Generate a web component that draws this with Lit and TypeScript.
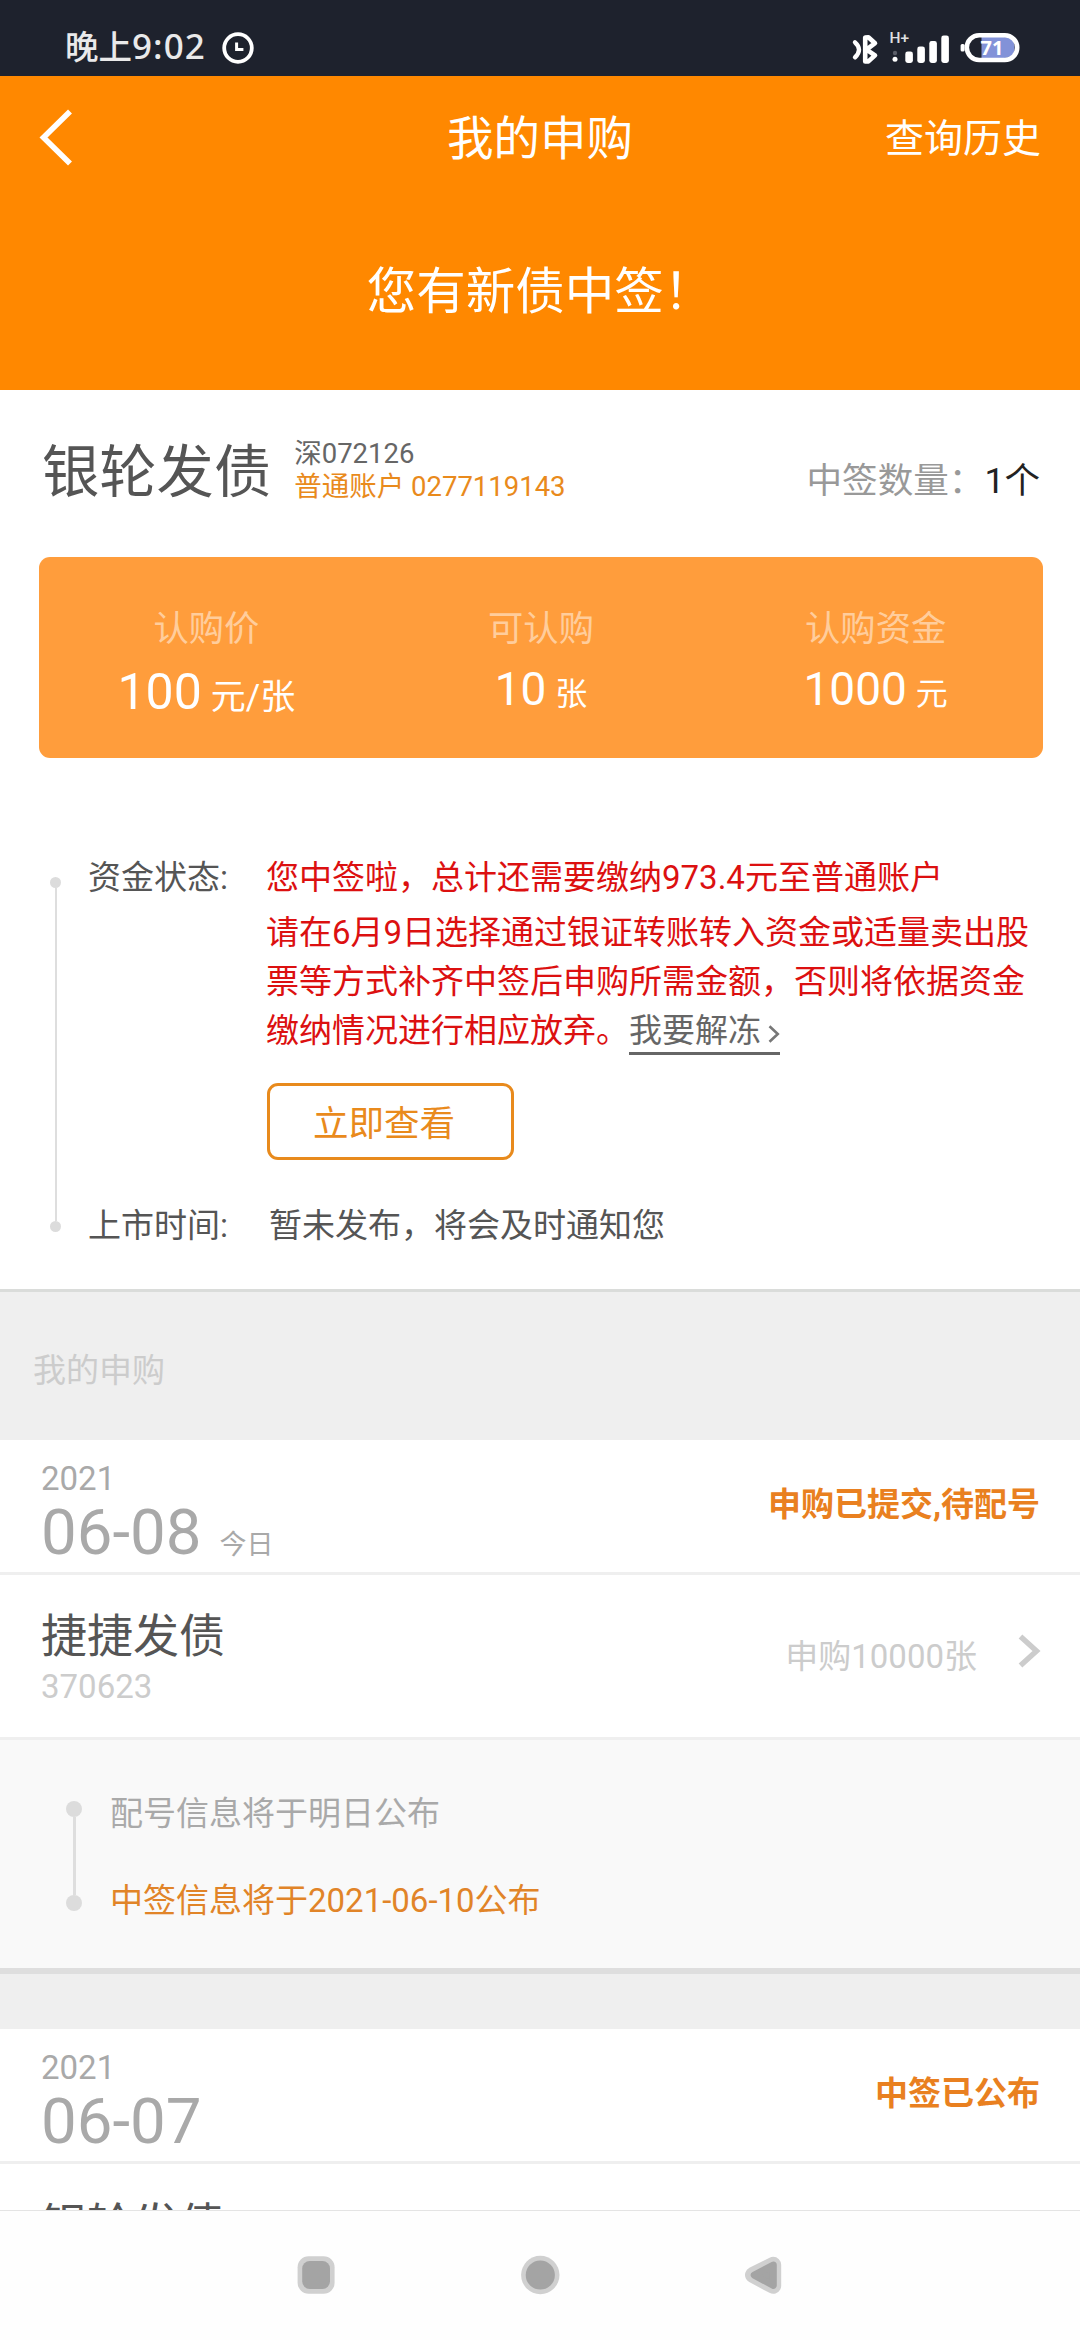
import { LitElement, html, css, nothing } from "lit";
import { customElement, property } from "lit/decorators.js";

interface Stat {
  label: string;
  value: string;
  unit: string;
  large?: boolean;
}

interface SubscriptionRecord {
  year: string;
  day: string;
  tag?: string;
  status: string;
  name: string;
  code: string;
  amount: string;
  steps: { text: string; active: boolean }[];
}

const STATS: Stat[] = [
  { label: "认购价", value: "100", unit: "元/张", large: true },
  { label: "可认购", value: "10", unit: "张" },
  { label: "认购资金", value: "1000", unit: "元" },
];

const RECORDS: SubscriptionRecord[] = [
  {
    year: "2021",
    day: "06-08",
    tag: "今日",
    status: "申购已提交,待配号",
    name: "捷捷发债",
    code: "370623",
    amount: "申购10000张",
    steps: [
      { text: "配号信息将于明日公布", active: false },
      { text: "中签信息将于2021-06-10公布", active: true },
    ],
  },
  {
    year: "2021",
    day: "06-07",
    status: "中签已公布",
    name: "银轮发债",
    code: "",
    amount: "",
    steps: [],
  },
];

@customElement("status-bar")
class StatusBar extends LitElement {
  static styles = css`
    :host {
      display: flex;
      align-items: flex-start;
      justify-content: space-between;
      box-sizing: border-box;
      height: 76px;
      padding: 27px 60px 0 65px;
      background: #1e222d;
      color: #e9e9ea;
    }
    .left {
      display: flex;
      align-items: center;
      height: 42px;
    }
    .time {
      font-size: 33.5px;
      font-weight: 500;
      line-height: 42px;
      white-space: nowrap;
    }
    .digits {
      font-family: "Noto Sans", Roboto, sans-serif;
      font-size: 35px;
      line-height: 1;
      letter-spacing: 1.1px;
    }
    .clock {
      margin-left: 16px;
    }
    svg {
      display: block;
    }
    .net {
      font: 500 15.5px Roboto, sans-serif;
      fill: #e0e0e2;
    }
    .charge {
      font: 700 20px "Noto Sans", Roboto, sans-serif;
      fill: #fff;
    }
  `;

  render() {
    return html`
      <div class="left">
        <span class="time">晚上<span class="digits">9:02</span></span>
        <svg class="clock" width="32" height="32" viewBox="0 0 32 32" fill="none" stroke="#fff">
          <circle cx="16" cy="16" r="13.8" stroke-width="3.8" />
          <path d="M14.6 10.5V17.4H21.4" stroke-width="3" />
        </svg>
      </div>
      <svg width="170" height="40" viewBox="850 27 170 40">
        <g fill="none" stroke="#fff" stroke-linecap="round" stroke-linejoin="round">
          <path d="M865.2 37.5V61.5L868.4 61.4L875 55.4L866.5 49.6L875 43.2L868.4 37.2Z" stroke-width="4.6" />
          <path d="M855 42.3Q863 49.5 855 57.3" stroke-width="4.4" />
        </g>
        <text class="net" x="889.6" y="43">H+</text>
        <circle cx="895" cy="53" r="2.2" fill="#5c5f69" />
        <circle cx="895" cy="59.3" r="2.5" fill="#fff" />
        <g fill="#fff">
          <rect x="905.3" y="51.5" width="7.6" height="11.5" rx="2.4" />
          <rect x="917.3" y="46.5" width="7.6" height="16.5" rx="2.4" />
          <rect x="929.3" y="41" width="7.6" height="22" rx="2.4" />
          <rect x="941.3" y="35.5" width="7.6" height="27.5" rx="2.4" />
          <rect x="960.6" y="44" width="4" height="7.5" rx="1.5" />
        </g>
        <path d="M981.5 37H1004Q1014.5 37 1014.5 47.5T1004 58H981.5Z" fill="#8292d8" />
        <rect x="966.8" y="35.2" width="50.4" height="24.8" rx="12.4" fill="none" stroke="#fff" stroke-width="4.6" />
        <text class="charge" x="980.5" y="54.8">71</text>
      </svg>
    `;
  }
}

@customElement("timeline-rail")
class TimelineRail extends LitElement {
  static styles = css`
    :host {
      display: flex;
      flex-direction: column;
      align-items: center;
      flex: none;
      width: var(--dot, 11px);
    }
    .dot {
      width: var(--dot, 11px);
      height: var(--dot, 11px);
      border-radius: 50%;
      background: #dcdcdc;
    }
    .line {
      flex: 1;
      width: var(--line, 2px);
      background: #dedede;
    }
  `;

  render() {
    return html`<span class="dot"></span><span class="line"></span><span class="dot"></span>`;
  }
}

@customElement("subscription-record")
class SubscriptionRecordView extends LitElement {
  static styles = css`
    :host {
      display: block;
      background: #fff;
      white-space: nowrap;
    }
    .date-row {
      display: flex;
      justify-content: space-between;
      box-sizing: border-box;
      height: 135px;
      padding: 21px 40px 0 41px;
      border-bottom: 3px solid #efefef;
      color: #a9a9a9;
    }
    .year {
      font-size: 33px;
      line-height: 36px;
    }
    .day {
      margin-top: 1px;
      font-size: 63.6px;
      line-height: 70px;
    }
    .tag {
      margin-left: 18px;
      font-size: 27px;
      line-height: 1;
    }
    .status {
      margin-top: 24px;
      font-size: 33px;
      font-weight: 700;
      line-height: 40px;
      color: #e98020;
    }
    .bond-row {
      display: flex;
      align-items: flex-start;
      box-sizing: border-box;
      height: 165px;
      padding: 35px 39px 0 41px;
      border-bottom: 3px solid #efefef;
      color: #ccc;
    }
    .bond {
      flex: 1;
    }
    .name {
      font-size: 46px;
      line-height: 52px;
      color: #555;
    }
    .code {
      margin-top: 3px;
      font-size: 33px;
      line-height: 44px;
    }
    .amount {
      margin: 27px 40px 0 0;
      font-size: 33px;
      line-height: 40px;
    }
    .arrow {
      margin-top: 24px;
    }
    .steps {
      display: flex;
      box-sizing: border-box;
      height: 234px;
      padding: 50px 40px 0 66px;
      border-bottom: 6px solid #dedede;
      background: #f9f9f9;
      --dot: 16px;
      --line: 3px;
    }
    .rail {
      height: 110px;
      margin-top: 11px;
    }
    .step {
      margin: 0 0 39px 28px;
      font-size: 33px;
      line-height: 48px;
      color: #a9a9a9;
    }
    .step.active {
      color: #e18428;
    }
  `;

  @property({ attribute: false }) record!: SubscriptionRecord;

  render() {
    const r = this.record;
    return html`
      <div class="date-row">
        <div>
          <div class="year">${r.year}</div>
          <div class="day">${r.day}${r.tag ? html`<span class="tag">${r.tag}</span>` : nothing}</div>
        </div>
        <div class="status">${r.status}</div>
      </div>
      <div class="bond-row">
        <div class="bond">
          <div class="name">${r.name}</div>
          <div class="code">${r.code}</div>
        </div>
        ${r.amount
          ? html`<div class="amount">${r.amount}</div>
              <svg class="arrow" width="24" height="34" viewBox="0 0 24 34" fill="none" stroke="#ccc" stroke-width="5.4">
                <path d="M3.5 2.5L19.5 17L3.5 31.5" />
              </svg>`
          : nothing}
      </div>
      ${r.steps.length
        ? html`<div class="steps">
            <timeline-rail class="rail"></timeline-rail>
            <div>
              ${r.steps.map((s) => html`<div class="step ${s.active ? "active" : ""}">${s.text}</div>`)}
            </div>
          </div>`
        : nothing}
    `;
  }
}

@customElement("app-root")
class AppRoot extends LitElement {
  static styles = css`
    :host {
      display: flex;
      flex-direction: column;
      width: 1080px;
      height: 2340px;
      overflow: hidden;
      background: #fff;
      font-family: Roboto, "Noto Sans CJK SC", sans-serif;
      white-space: nowrap;
    }
    .header {
      flex: none;
      box-sizing: border-box;
      height: 314px;
      background: #ff8800;
      color: #fff;
    }
    .bar {
      display: grid;
      grid-template-columns: 1fr auto 1fr;
      align-items: center;
      height: 126px;
      padding: 0 39px;
    }
    .back {
      display: block;
      margin-bottom: 5px;
    }
    .title {
      font-size: 46.5px;
      line-height: 60px;
    }
    .history {
      justify-self: end;
      font-size: 39px;
      line-height: 60px;
    }
    .hero {
      text-align: center;
      font-size: 49.5px;
      line-height: 60px;
      padding-top: 60px;
    }
    .content {
      flex: 1;
      min-height: 0;
      overflow: hidden;
    }
    .offer {
      box-sizing: border-box;
      height: 902px;
      border-bottom: 3px solid #dadcda;
    }
    .offer-head {
      display: flex;
      align-items: flex-start;
      height: 167px;
      padding: 0 40px 0 42px;
    }
    .offer-name {
      margin: 53px 23px 0 0;
      font-size: 57.3px;
      line-height: 60px;
      color: #555;
    }
    .meta {
      margin-top: 47px;
      font-size: 27.5px;
      line-height: 33px;
      color: #666;
    }
    .account {
      color: #e98a1c;
    }
    .count {
      margin: 71px 0 0 auto;
      font-size: 35.6px;
      line-height: 41px;
      color: #999;
    }
    .count-value {
      color: #222;
    }
    .card {
      display: grid;
      grid-template-columns: repeat(3, 1fr);
      box-sizing: border-box;
      height: 201px;
      margin: 0 37px 0 39px;
      padding-top: 52px;
      border-radius: 11px;
      background: #ff9d3c;
      text-align: center;
      color: #fff;
    }
    .stat-label {
      font-size: 35.3px;
      line-height: 40px;
      color: #ffcd9c;
    }
    .stat-value {
      margin-top: 10px;
      font-size: 46px;
      line-height: 60px;
    }
    .stat-unit {
      margin-left: 9px;
      font-size: 32px;
      line-height: 1;
    }
    .large .stat-value {
      margin-top: 13px;
      font-size: 50px;
    }
    .large .stat-unit {
      font-size: 35px;
    }
    .progress {
      display: flex;
      padding: 95px 0 0 50px;
      font-size: 33px;
      line-height: 49px;
      color: #555;
    }
    .rail {
      height: 355px;
      margin: 24px 27px 0 0;
    }
    .rows {
      display: grid;
      grid-template-columns: 178px auto;
      row-gap: 41px;
    }
    .alert {
      color: #dc1010;
    }
    .notice {
      margin-top: 6px;
    }
    .notice-last {
      display: flex;
    }
    .unfreeze {
      display: flex;
      align-items: flex-start;
      box-sizing: border-box;
      height: 49px;
      border-bottom: 3px solid #666;
      color: #666;
    }
    .unfreeze-arrow {
      margin: 19px 0 0 7px;
    }
    .view {
      box-sizing: border-box;
      width: 247px;
      height: 77px;
      margin: 28px 0 0 1px;
      padding: 3px 13px 0 0;
      border: 3px solid #e88a1c;
      border-radius: 11px;
      text-align: center;
      font-size: 35.5px;
      line-height: 70px;
      color: #e98a1c;
    }
    .pending {
      padding-left: 3px;
    }
    .section-title {
      box-sizing: border-box;
      height: 148px;
      padding: 54px 33px 0;
      background: #efefef;
      font-size: 33px;
      line-height: 50px;
      color: #ccc;
    }
    .record + .record {
      border-top: 55px solid #efefef;
    }
    .nav {
      flex: none;
      box-sizing: border-box;
      height: 130px;
      border-top: 1px solid #e4e4e4;
      background: #fefefe;
    }
    .nav-icons {
      display: block;
    }
  `;

  render() {
    return html`
      <status-bar></status-bar>
      <header class="header">
        <div class="bar">
          <svg class="back" width="36" height="58" viewBox="0 0 36 58" fill="none" stroke="#fff" stroke-width="5.6">
            <path d="M31 3.5L4.5 29.5L31 55.5" />
          </svg>
          <div class="title">我的申购</div>
          <div class="history">查询历史</div>
        </div>
        <div class="hero">您有新债中签！</div>
      </header>
      <main class="content">
        <section class="offer">
          <div class="offer-head">
            <div class="offer-name">银轮发债</div>
            <div class="meta">
              <div>深072126</div>
              <div class="account">普通账户 0277119143</div>
            </div>
            <div class="count">中签数量：<span class="count-value">1个</span></div>
          </div>
          <div class="card">
            ${STATS.map(
              (s) => html`<div class=${s.large ? "large" : "regular"}>
                <div class="stat-label">${s.label}</div>
                <div class="stat-value">${s.value}<span class="stat-unit">${s.unit}</span></div>
              </div>`
            )}
          </div>
          <div class="progress">
            <timeline-rail class="rail"></timeline-rail>
            <div class="rows">
              <div>资金状态:</div>
              <div>
                <div class="alert">您中签啦，总计还需要缴纳973.4元至普通账户</div>
                <div class="alert notice">
                  <div>请在6月9日选择通过银证转账转入资金或适量卖出股</div>
                  <div>票等方式补齐中签后申购所需金额，否则将依据资金</div>
                  <div class="notice-last">
                    <span>缴纳情况进行相应放弃。</span>
                    <span class="unfreeze"
                      >我要解冻<svg
                        class="unfreeze-arrow"
                        width="12"
                        height="18"
                        viewBox="0 0 12 18"
                        fill="none"
                        stroke="#777"
                        stroke-width="2.6"
                      >
                        <path d="M1.5 1.2L9.8 9L1.5 16.8" /></svg
                    ></span>
                  </div>
                </div>
                <div class="view">立即查看</div>
              </div>
              <div>上市时间:</div>
              <div class="pending">暂未发布，将会及时通知您</div>
            </div>
          </div>
        </section>
        <div class="section-title">我的申购</div>
        ${RECORDS.map((r) => html`<subscription-record class="record" .record=${r}></subscription-record>`)}
      </main>
      <nav class="nav">
        <svg class="nav-icons" width="1080" height="129" viewBox="0 2211 1080 129">
          <g fill="#d0d0d0">
            <rect x="297.6" y="2256.3" width="37" height="37.4" rx="11" />
            <circle cx="540.3" cy="2275" r="19.2" />
          </g>
          <g fill="#a4a4a4">
            <rect x="302.2" y="2261" width="27.8" height="28" rx="7.5" />
            <circle cx="540.3" cy="2275" r="14.6" />
          </g>
          <path
            d="M773.2 2264.8L753 2275L773.2 2285.8Z"
            fill="#d0d0d0"
            stroke="#d0d0d0"
            stroke-width="16"
            stroke-linejoin="round"
          />
          <path
            d="M773.3 2265L754.2 2275.2L773.3 2285.4Z"
            fill="#a4a4a4"
            stroke="#a4a4a4"
            stroke-width="7"
            stroke-linejoin="round"
          />
        </svg>
      </nav>
    `;
  }
}
